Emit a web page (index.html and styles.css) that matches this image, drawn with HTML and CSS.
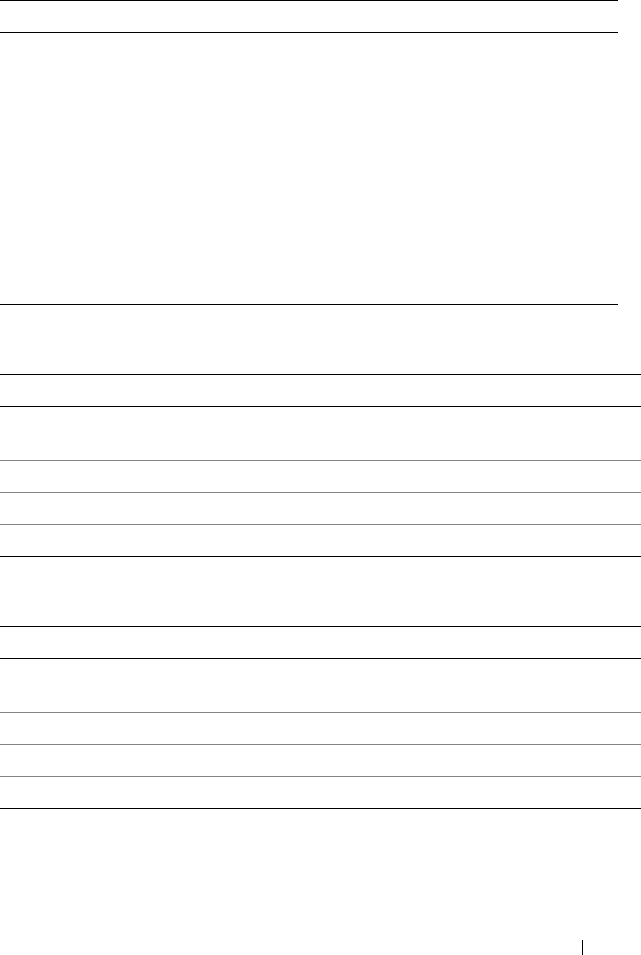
FILE: index.html
```html
<!DOCTYPE html>
<html lang="en">
<head>
<meta charset="utf-8">
<title>Document page</title>
<link rel="stylesheet" href="styles.css">
</head>
<body>
<div class="page">
  <section class="box">
    <div class="box-head"></div>
    <div class="box-body"></div>
  </section>

  <div class="spacer"></div>

  <section class="tbl">
    <div class="row head"></div>
    <div class="row tall"></div>
    <div class="row"></div>
    <div class="row"></div>
    <div class="row last"></div>
  </section>

  <div class="spacer"></div>

  <section class="tbl">
    <div class="row head"></div>
    <div class="row tall"></div>
    <div class="row"></div>
    <div class="row"></div>
    <div class="row last"></div>
  </section>

  <div class="rest"></div>

  <footer class="footer">
    <span class="folio"></span>
  </footer>
</div>
</body>
</html>
```

FILE: styles.css
```css
html, body {
  margin: 0;
  padding: 0;
  background: #ffffff;
  font-family: "Liberation Serif", serif;
}

.page {
  width: 641px;
  height: 955px;
  overflow: hidden;
  display: flex;
  flex-direction: column;
}

.box {
  width: 618px;
  border-top: 1px solid #000;
  border-bottom: 1px solid #000;
}

.box-head {
  height: 31px;
  border-bottom: 1px solid #000;
}

.box-body {
  height: 271px;
}

.spacer {
  height: 69px;
  flex: none;
}

.tbl {
  width: 641px;
  border-top: 1px solid #000;
}

.row {
  height: 31px;
  border-bottom: 1px solid #858585;
}

.row.head {
  border-bottom-color: #000;
}

.row.tall {
  height: 53px;
}

.row.last {
  border-bottom-color: #000;
}

.rest {
  height: 131px;
  flex: none;
}

.footer {
  height: 15px;
  display: flex;
  justify-content: flex-end;
  padding-right: 58px;
}

.folio {
  width: 1px;
  height: 15px;
  background: #000;
}
```
